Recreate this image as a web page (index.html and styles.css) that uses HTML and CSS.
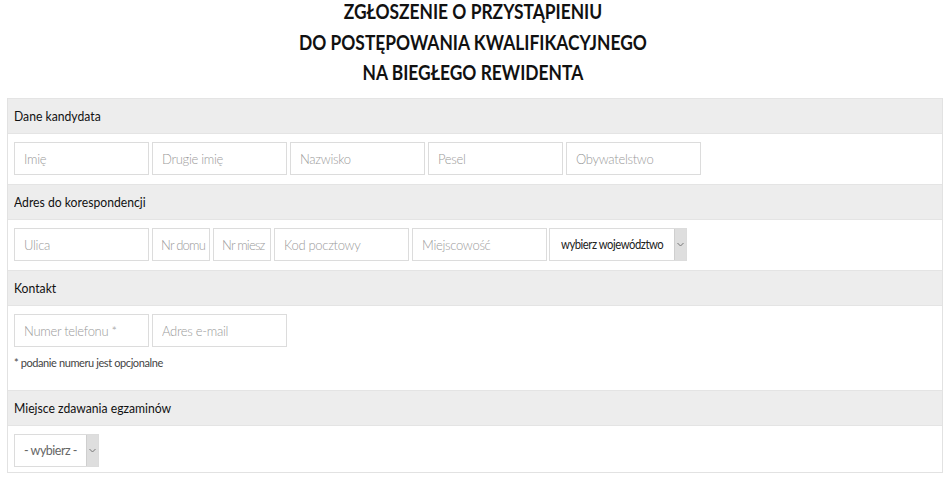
FILE: index.html
```html
<!DOCTYPE html>
<html>
<head>
    <meta charset="utf-8">
    <title>Zgłoszenie</title>
    <link rel="stylesheet" href="styles.css">
</head>
<body>
    <h1 class="title"><span class="squeeze">ZGŁOSZENIE O PRZYSTĄPIENIU<br>DO POSTĘPOWANIA KWALIFIKACYJNEGO<br>NA BIEGŁEGO REWIDENTA</span></h1>

    <div class="form">
        <div class="section-head"><span class="squeeze">Dane kandydata</span></div>
        <div class="row">
            <input class="field" type="text" placeholder="Imię">
            <input class="field" type="text" placeholder="Drugie imię">
            <input class="field" type="text" placeholder="Nazwisko">
            <input class="field" type="text" placeholder="Pesel">
            <input class="field" type="text" placeholder="Obywatelstwo">
        </div>

        <div class="section-head"><span class="squeeze">Adres do korespondencji</span></div>
        <div class="row">
            <input class="field" type="text" placeholder="Ulica">
            <input class="field small" type="text" placeholder="Nr domu">
            <input class="field small" type="text" placeholder="Nr miesz">
            <input class="field" type="text" placeholder="Kod pocztowy">
            <input class="field" type="text" placeholder="Miejscowość">
            <div class="select wide">
                <span class="select-text"><span class="squeeze">wybierz województwo</span></span>
                <span class="select-btn"><svg width="7" height="5" viewBox="0 0 7 5"><path d="M0.5 1 L3.5 4 L6.5 1" fill="none" stroke="#777" stroke-width="1"/></svg></span>
            </div>
        </div>

        <div class="section-head"><span class="squeeze">Kontakt</span></div>
        <div class="row">
            <input class="field" type="text" placeholder="Numer telefonu *">
            <input class="field" type="text" placeholder="Adres e-mail">
        </div>
        <p class="note">* podanie numeru jest opcjonalne</p>

        <div class="section-head"><span class="squeeze">Miejsce zdawania egzaminów</span></div>
        <div class="row">
            <div class="select short">
                <span class="select-text center">- wybierz -</span>
                <span class="select-btn"><svg width="7" height="5" viewBox="0 0 7 5"><path d="M0.5 1 L3.5 4 L6.5 1" fill="none" stroke="#777" stroke-width="1"/></svg></span>
            </div>
        </div>
    </div>
</body>
</html>
```

FILE: styles.css
```css
* {
    margin: 0;
    padding: 0;
    box-sizing: border-box;
    font-family: 'Lato', 'Liberation Sans', sans-serif;
}

body {
    background: #fff;
    color: #222;
}

.title {
    text-align: center;
    font-size: 20px;
    line-height: 30.5px;
    font-weight: 700;
    color: #111;
    margin-top: -4px;
    height: 102px;
}

.title .squeeze {
    display: inline-block;
    transform: scaleX(0.87);
    transform-origin: center top;
}

.form {
    margin: 0 2px 0 7px;
    border: 1px solid #e2e2e2;
    border-top: 0;
    height: 375px;
}

.section-head {
    background: #ededed;
    height: 36px;
    line-height: 34px;
    padding-left: 6px;
    font-size: 14px;
    color: #111;
    border-top: 1px solid #e4e4e4;
    border-bottom: 1px solid #e4e4e4;
}

.section-head .squeeze {
    display: inline-block;
    transform: scaleX(0.87);
    transform-origin: left center;
}

.row {
    display: flex;
    gap: 3px;
    padding: 8px 6px 0 6px;
    height: 50px;
}

.field {
    width: 135px;
    height: 33px;
    border: 1px solid #dcdcdc;
    padding: 0 9px;
    font-size: 13px;
    font-weight: 300;
    letter-spacing: -0.3px;
    color: #333;
    background: #fff;
}

.field::placeholder {
    color: #9a9a9a;
}

.field.small {
    width: 58px;
    padding: 0 2px 0 8px;
    letter-spacing: -0.8px;
}

.select {
    display: flex;
    height: 33px;
    border: 1px solid #dcdcdc;
    background: #fff;
}

.select.wide {
    width: 138px;
    margin-left: -1px;
}

.select.short {
    width: 85px;
}

.select-text {
    flex: 1;
    white-space: nowrap;
    overflow: hidden;
    line-height: 31px;
    padding-left: 11px;
    font-size: 12.5px;
    letter-spacing: -0.5px;
    color: #222;
}

.select-text .squeeze {
    display: inline-block;
    transform: scaleX(0.9);
    transform-origin: left center;
}

.select-text.center {
    padding-left: 0;
    text-align: center;
    color: #666;
}

.select-btn {
    width: 12px;
    flex: none;
    background: #dedede;
    border-left: 1px solid #cfcfcf;
    display: flex;
    align-items: center;
    justify-content: center;
}

.note {
    font-size: 11px;
    letter-spacing: -0.4px;
    color: #444;
    padding-left: 6px;
    height: 34px;
    line-height: 14px;
    padding-top: 0;
}
```
